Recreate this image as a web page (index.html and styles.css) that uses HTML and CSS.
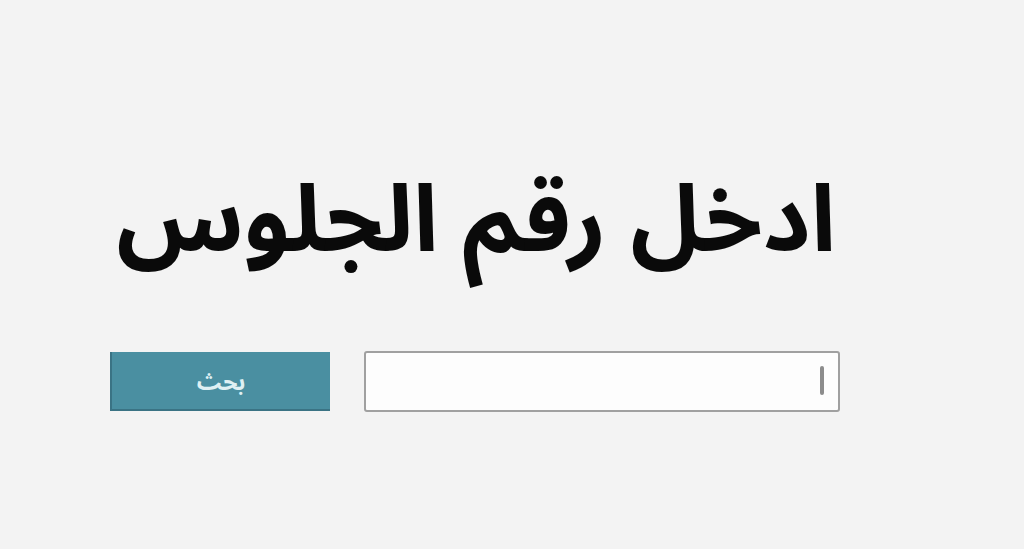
FILE: index.html
```html
<!DOCTYPE html>
<html lang="ar" dir="rtl">
<head>
    <meta charset="UTF-8">
    <link rel="stylesheet" href="styles.css">
</head>
<body>
    <div class="box">
        <h1 class="title">ادخل رقم الجلوس</h1>
        <form class="search">
            <div class="fieldWrap">
                <input class="field" type="text">
            </div>
            <button class="btn" type="button">بحث</button>
        </form>
    </div>
</body>
</html>
```

FILE: styles.css
```css
*{
    padding: 0;
    margin: 0;
    box-sizing: border-box;
}

body{
    background-color: #f3f3f3;
    font-family: "Noto Sans Arabic", "DejaVu Sans", sans-serif;
}

.box{
    width: 730px;
    margin-right: 184px;
    padding-top: 142px;
}

.title{
    font-size: 93px;
    font-weight: bold;
    color: #0a0a0a;
    line-height: 160px;
    text-align: right;
    padding-right: 4px;
    white-space: nowrap;
}

.search{
    display: flex;
    justify-content: space-between;
    align-items: flex-start;
    margin-top: 49px;
}

.fieldWrap{
    position: relative;
}

/* fake caret */
.fieldWrap::after{
    content: '';
    position: absolute;
    right: 16px;
    top: 15px;
    width: 4px;
    height: 29px;
    border-radius: 2px;
    background-color: #8c8c8c;
}

.field{
    display: block;
    width: 476px;
    height: 61px;
    border: 2px solid #a0a0a0;
    border-radius: 3px;
    background-color: #fdfdfd;
    outline: none;
}

.btn{
    width: 220px;
    height: 59px;
    margin-top: 1px;
    background-color: #4a8fa1;
    border: none;
    border-left: 2px solid #3a7384;
    border-bottom: 2px solid #3a7384;
    color: #dff0f3;
    font-family: "Noto Sans Arabic", "DejaVu Sans", sans-serif;
    font-size: 23px;
    font-weight: bold;
    padding-top: 3px;
}
```
